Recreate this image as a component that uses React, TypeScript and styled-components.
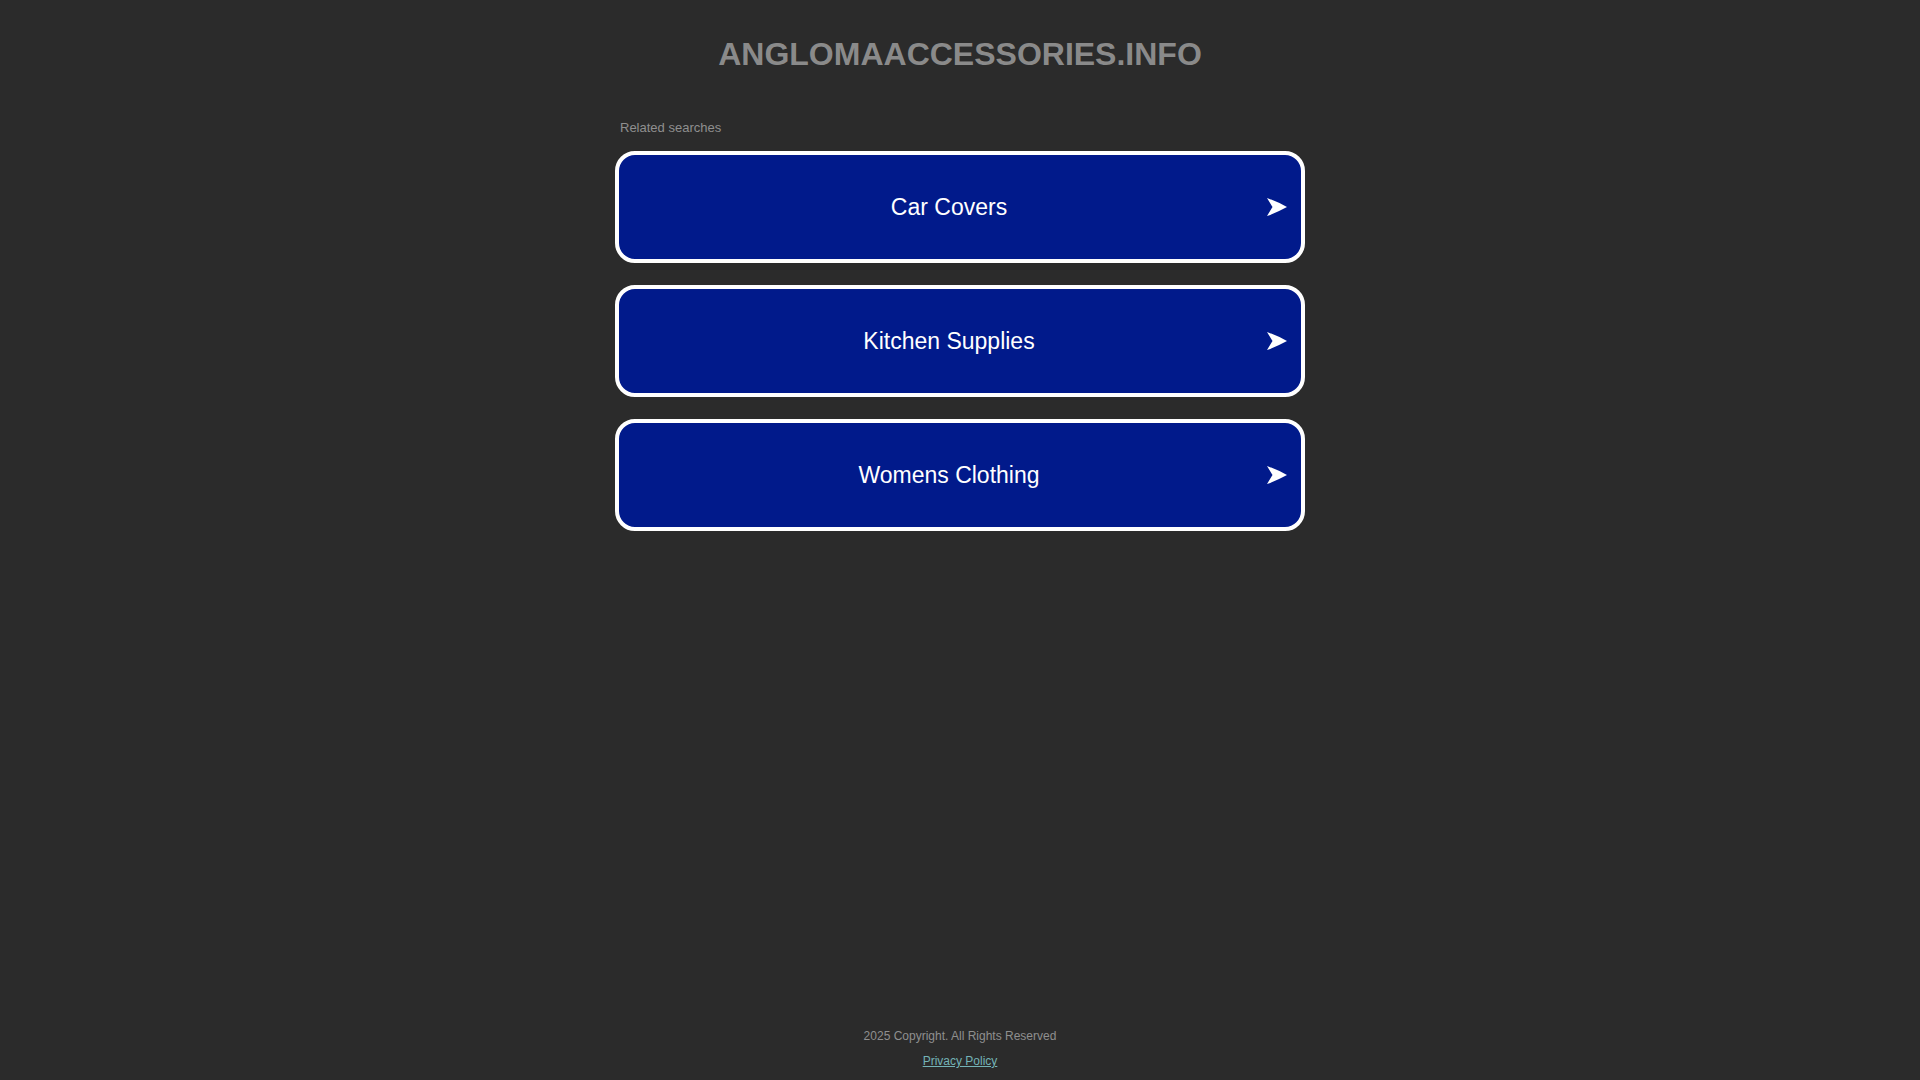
import styled, { createGlobalStyle } from "styled-components";

// Types
type SearchLinkProps = {
  label: string;
};

const searches = ["Car Covers", "Kitchen Supplies", "Womens Clothing"];

const Arrow = () => (
  <ArrowIcon viewBox="0 0 20 18" aria-hidden="true">
    <path d="M0 0 Q10 3.5 20 9 Q10 14.5 0 18 L5.5 9 Z" fill="#ffffff" />
  </ArrowIcon>
);

const SearchLink = ({ label }: SearchLinkProps) => (
  <LinkBox href="#">
    <LinkText>{label}</LinkText>
    <Arrow />
  </LinkBox>
);

const App = () => {
  return (
    <>
      <GlobalStyle />
      <Page>
        <Header>
          <DomainTitle>ANGLOMAACCESSORIES.INFO</DomainTitle>
        </Header>
        <Main>
          <SectionLabel>Related searches</SectionLabel>
          <LinkList>
            {searches.map((item) => (
              <SearchLink key={item} label={item} />
            ))}
          </LinkList>
        </Main>
        <Footer>
          <Copyright>2025 Copyright. All Rights Reserved</Copyright>
          <PolicyLink href="#">Privacy Policy</PolicyLink>
        </Footer>
      </Page>
    </>
  );
};

// Styles
const GlobalStyle = createGlobalStyle`
  html, body {
    margin: 0;
    padding: 0;
    background-color: #2b2b2b;
  }
  body {
    font-family: "Liberation Sans", Arial, sans-serif;
  }
`;

const Page = styled.div`
  min-height: 100vh;
  display: flex;
  flex-direction: column;
  align-items: center;
  box-sizing: border-box;
`;

const Header = styled.header`
  padding-top: 35px;
  height: 120px;
  box-sizing: border-box;
  text-align: center;
`;

const DomainTitle = styled.h1`
  margin: 0;
  font-size: 32px;
  line-height: 38px;
  font-weight: bold;
  color: #8a8a8a;
`;

const Main = styled.main`
  width: 690px;
  display: flex;
  flex-direction: column;
  flex: 1;
`;

const SectionLabel = styled.div`
  padding-left: 5px;
  font-size: 13px;
  line-height: 15px;
  color: #8f8f8f;
  margin-bottom: 16px;
`;

const LinkList = styled.div`
  display: flex;
  flex-direction: column;
  gap: 22px;
`;

const LinkBox = styled.a`
  position: relative;
  display: flex;
  align-items: center;
  justify-content: center;
  height: 112px;
  box-sizing: border-box;
  padding-right: 22px;
  border: 4px solid #ffffff;
  border-radius: 20px;
  background-color: #011a8b;
  text-decoration: none;
`;

const LinkText = styled.span`
  font-size: 23px;
  color: #ffffff;
`;

const ArrowIcon = styled.svg`
  position: absolute;
  right: 14px;
  top: 50%;
  width: 20px;
  height: 18px;
  margin-top: -9px;
`;

const Footer = styled.footer`
  display: flex;
  flex-direction: column;
  align-items: center;
  gap: 10px;
  padding-bottom: 11px;
`;

const Copyright = styled.div`
  font-size: 12px;
  line-height: 15px;
  color: #8f8f8f;
`;

const PolicyLink = styled.a`
  font-size: 12px;
  line-height: 15px;
  color: #74b3b7;
  text-decoration: underline;
`;

// Exports
export default App;
